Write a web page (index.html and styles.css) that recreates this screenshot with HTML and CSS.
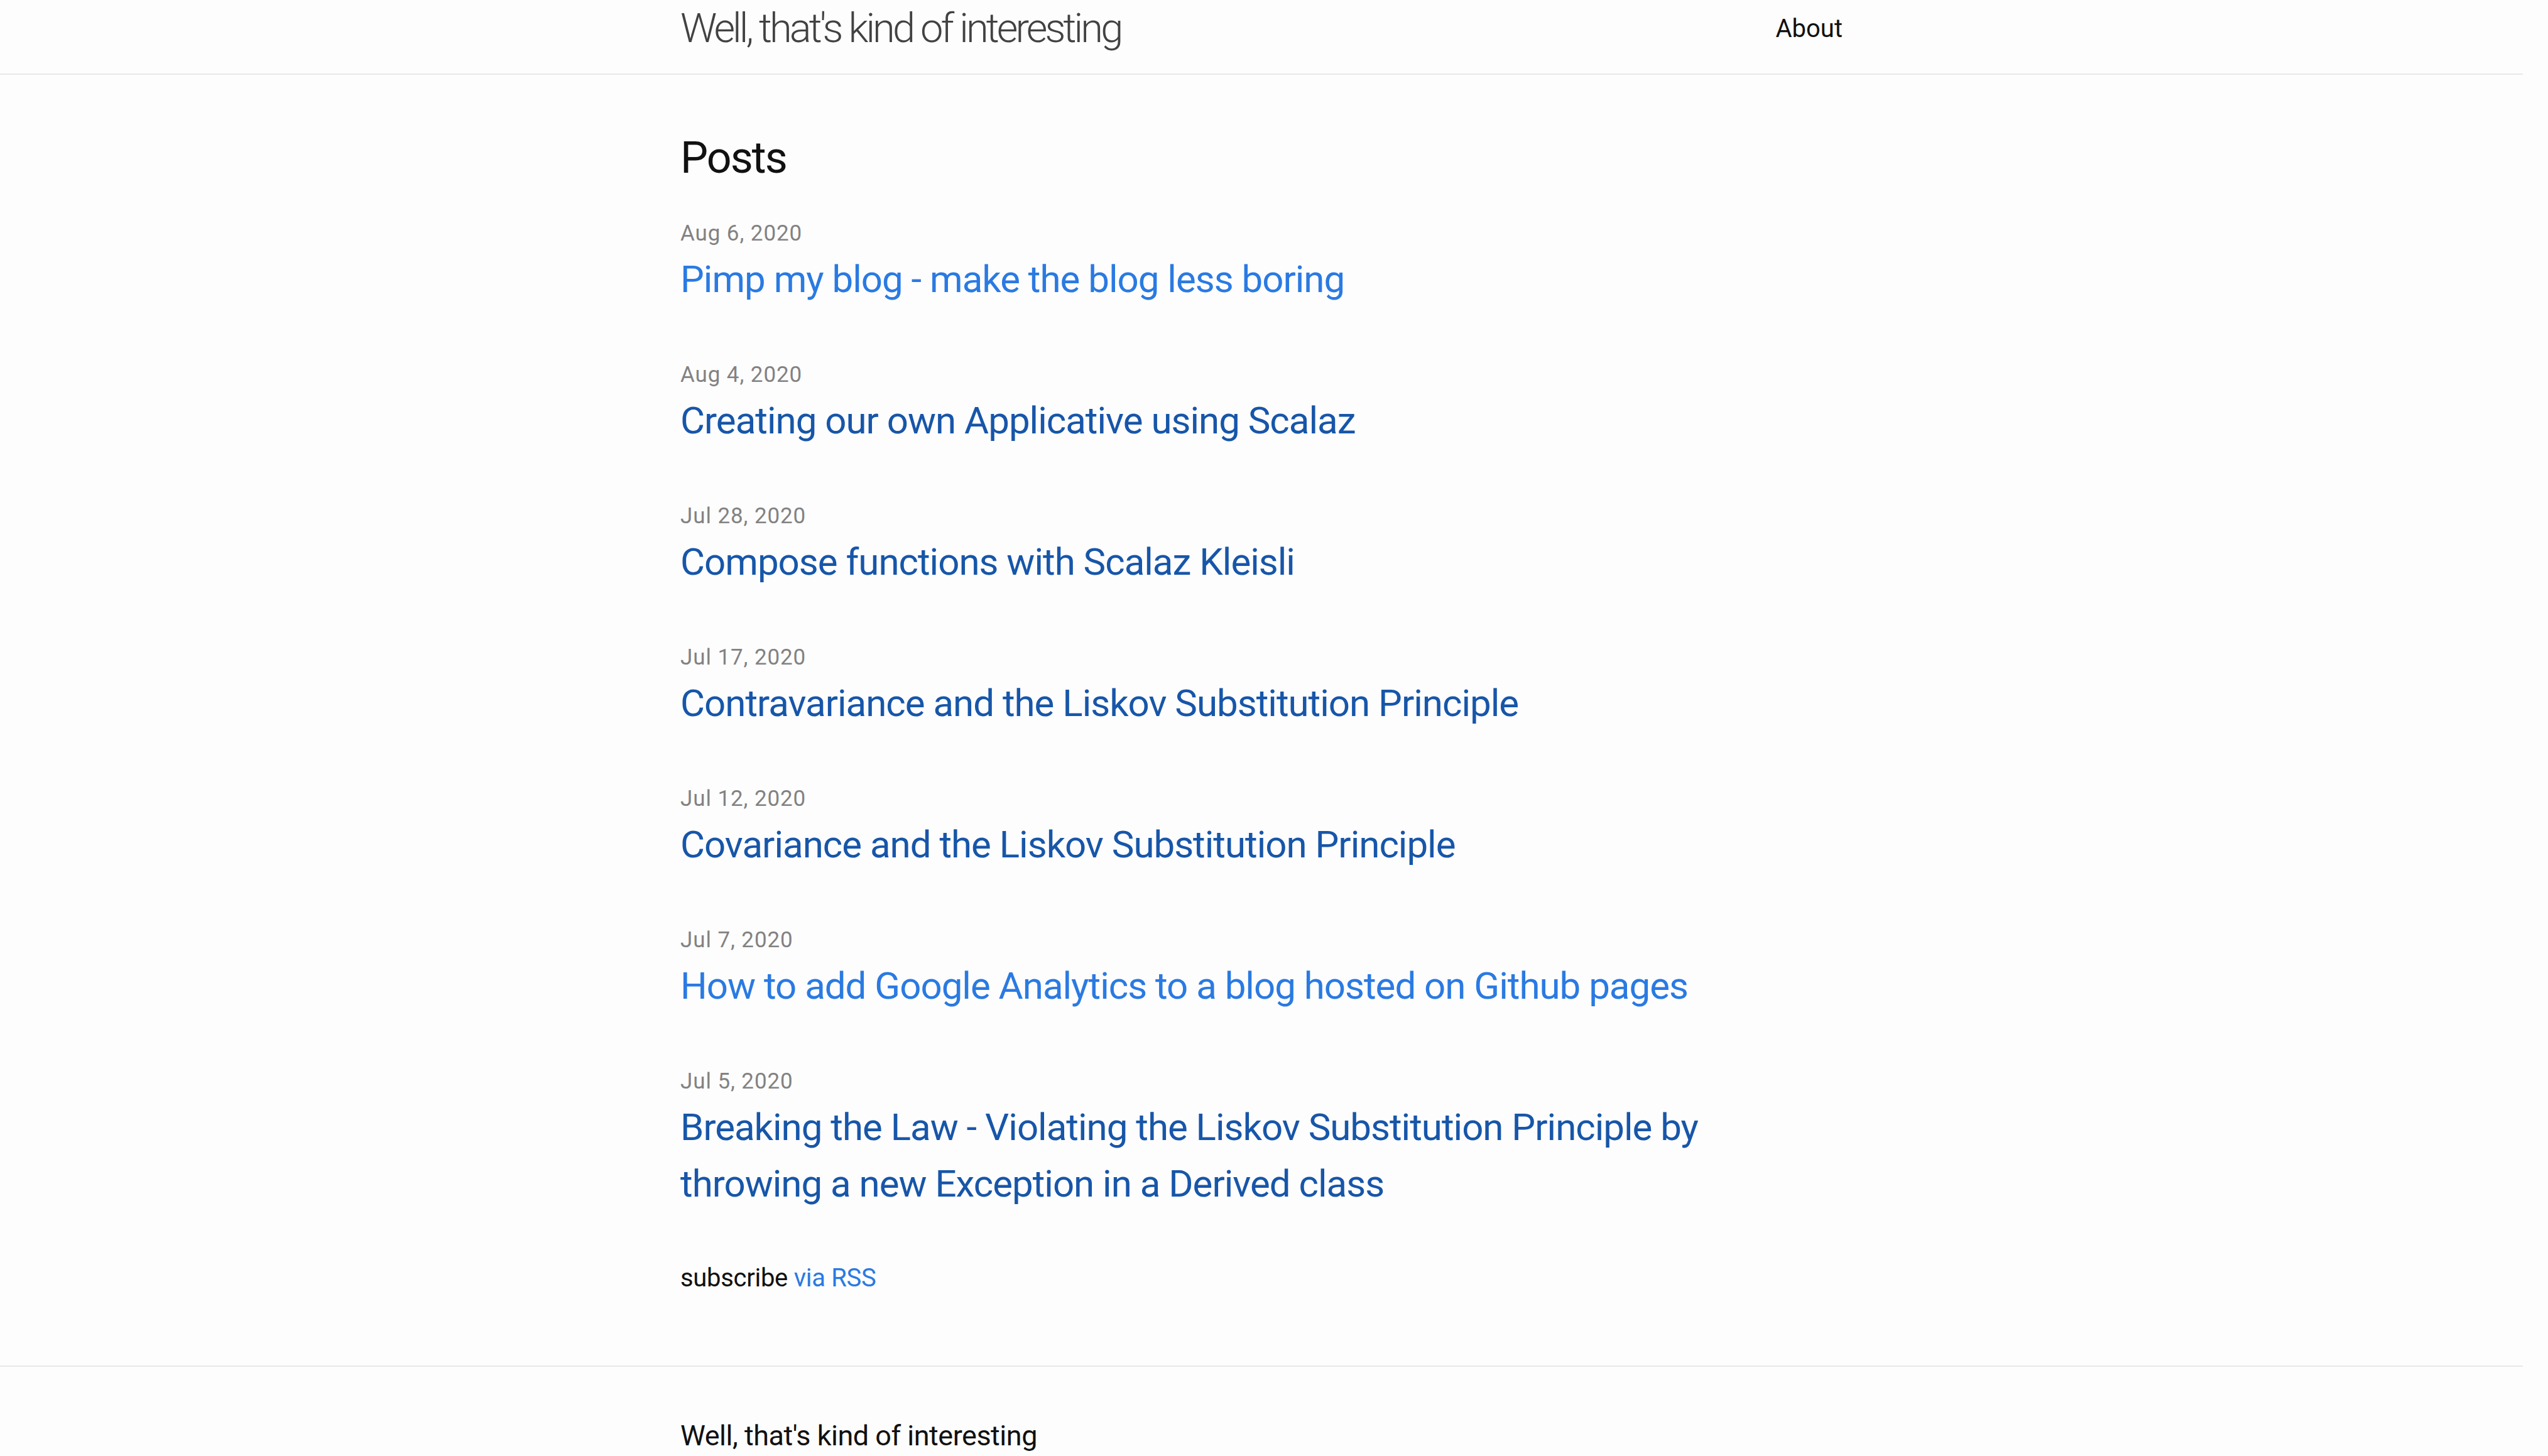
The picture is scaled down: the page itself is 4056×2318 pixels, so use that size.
FILE: index.html
```html
<!DOCTYPE html>
<html lang="en">
<head>
<meta charset="utf-8">
<title>Well, that's kind of interesting</title>
<link rel="stylesheet" href="styles.css">
</head>
<body>
<header class="site-header">
  <div class="wrapper header-inner">
    <a class="site-title" href="#">Well, that's kind of interesting</a>
    <nav class="site-nav">
      <a class="page-link" href="#">About</a>
    </nav>
  </div>
</header>

<main class="page-content">
  <div class="wrapper">
    <div class="home">
      <h2 class="post-list-heading">Posts</h2>
      <ul class="post-list">
        <li>
          <span class="post-meta">Aug 6, 2020</span>
          <h3><a class="post-link" href="#">Pimp my blog - make the blog less boring</a></h3>
        </li>
        <li>
          <span class="post-meta">Aug 4, 2020</span>
          <h3><a class="post-link visited" href="#">Creating our own Applicative using Scalaz</a></h3>
        </li>
        <li>
          <span class="post-meta">Jul 28, 2020</span>
          <h3><a class="post-link visited" href="#">Compose functions with Scalaz Kleisli</a></h3>
        </li>
        <li>
          <span class="post-meta">Jul 17, 2020</span>
          <h3><a class="post-link visited" href="#">Contravariance and the Liskov Substitution Principle</a></h3>
        </li>
        <li>
          <span class="post-meta">Jul 12, 2020</span>
          <h3><a class="post-link visited" href="#">Covariance and the Liskov Substitution Principle</a></h3>
        </li>
        <li>
          <span class="post-meta">Jul 7, 2020</span>
          <h3><a class="post-link" href="#">How to add Google Analytics to a blog hosted on Github pages</a></h3>
        </li>
        <li>
          <span class="post-meta">Jul 5, 2020</span>
          <h3><a class="post-link visited" href="#">Breaking the Law - Violating the Liskov Substitution Principle by throwing a new Exception in a Derived class</a></h3>
        </li>
      </ul>
      <p class="rss-subscribe">subscribe <a class="rss-link" href="#">via RSS</a></p>
    </div>
  </div>
</main>

<footer class="site-footer">
  <div class="wrapper">
    <h2 class="footer-heading">Well, that's kind of interesting</h2>
  </div>
</footer>
</body>
</html>
```

FILE: styles.css
```css
html, body {
  margin: 0;
  padding: 0;
}

body {
  padding-right: 40px;
  background: #fdfdfd;
  color: #111111;
  font-family: Roboto, "Liberation Sans", Arial, sans-serif;
  font-size: 40px;
  font-weight: 400;
  line-height: 1.5;
}

a {
  text-decoration: none;
}

.wrapper {
  max-width: 1850px;
  margin: 0 auto;
  padding: 0 75px;
}

/* Header */
.site-header {
  height: 117px;
  border-bottom: 2px solid #e8e8e8;
  overflow: hidden;
}

.header-inner {
  display: flex;
  justify-content: space-between;
  align-items: flex-start;
  margin-top: -22px;
}

.site-title {
  font-size: 65px;
  font-weight: 300;
  line-height: 135px;
  letter-spacing: -3.9px;
  color: #424242;
}

.site-nav {
  line-height: 135px;
}

.page-link {
  color: #111111;
  font-size: 40px;
}

/* Content */
.page-content {
  padding: 80px 0 72px;
}

.post-list-heading {
  margin: 0 0 35.5px;
  font-size: 70px;
  font-weight: 400;
  line-height: 105px;
  letter-spacing: -2px;
}

.post-list {
  list-style: none;
  margin: 0;
  padding: 0;
}

.post-list li {
  margin-bottom: 75px;
}

.post-meta {
  font-size: 35px;
  color: #828282;
  letter-spacing: 0.9px;
}

.post-list h3 {
  margin: 0;
  font-size: 60px;
  font-weight: 400;
  line-height: 90px;
  letter-spacing: -1px;
}

.post-link {
  color: #2a7ae2;
}

.post-link.visited {
  color: #1756a9;
}

.rss-subscribe {
  margin: 0 0 37.5px;
  letter-spacing: -0.3px;
}

.rss-link {
  color: #2a7ae2;
}

/* Footer */
.site-footer {
  border-top: 2px solid #e8e8e8;
  padding: 76px 0;
}

.footer-heading {
  margin: 0 0 37.5px;
  font-size: 45px;
  font-weight: 400;
  line-height: 67.5px;
  letter-spacing: -0.5px;
}
```
